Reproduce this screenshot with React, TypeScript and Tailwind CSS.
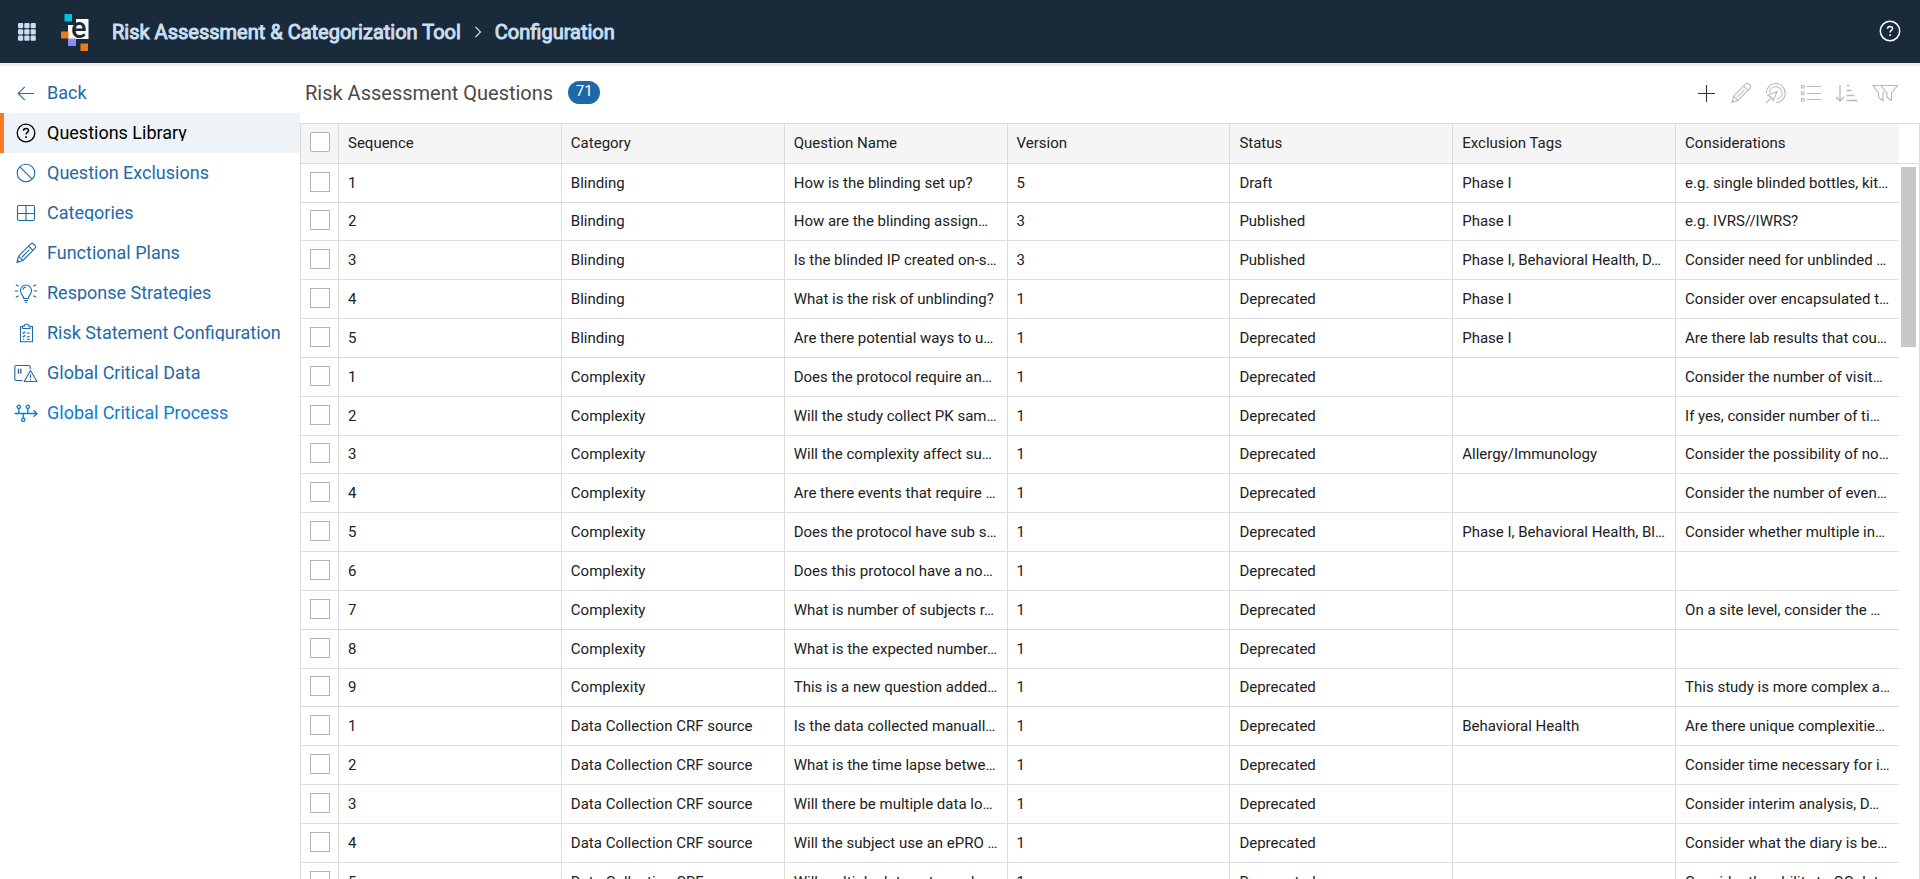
import type { ReactNode } from "react";

type Question = [string, string, string, string, string, string, string];

const columns = ["Sequence", "Category", "Question Name", "Version", "Status", "Exclusion Tags", "Considerations"];

const questions: Question[] = [
  ["1", "Blinding", "How is the blinding set up?", "5", "Draft", "Phase I", "e.g. single blinded bottles, kit…"],
  ["2", "Blinding", "How are the blinding assign…", "3", "Published", "Phase I", "e.g. IVRS//IWRS?"],
  ["3", "Blinding", "Is the blinded IP created on-s…", "3", "Published", "Phase I, Behavioral Health, D…", "Consider need for unblinded …"],
  ["4", "Blinding", "What is the risk of unblinding?", "1", "Deprecated", "Phase I", "Consider over encapsulated t…"],
  ["5", "Blinding", "Are there potential ways to u…", "1", "Deprecated", "Phase I", "Are there lab results that cou…"],
  ["1", "Complexity", "Does the protocol require an…", "1", "Deprecated", "", "Consider the number of visit…"],
  ["2", "Complexity", "Will the study collect PK sam…", "1", "Deprecated", "", "If yes, consider number of ti…"],
  ["3", "Complexity", "Will the complexity affect su…", "1", "Deprecated", "Allergy/Immunology", "Consider the possibility of no…"],
  ["4", "Complexity", "Are there events that require …", "1", "Deprecated", "", "Consider the number of even…"],
  ["5", "Complexity", "Does the protocol have sub s…", "1", "Deprecated", "Phase I, Behavioral Health, Bl…", "Consider whether multiple in…"],
  ["6", "Complexity", "Does this protocol have a no…", "1", "Deprecated", "", ""],
  ["7", "Complexity", "What is number of subjects r…", "1", "Deprecated", "", "On a site level, consider the …"],
  ["8", "Complexity", "What is the expected number…", "1", "Deprecated", "", ""],
  ["9", "Complexity", "This is a new question added…", "1", "Deprecated", "", "This study is more complex a…"],
  ["1", "Data Collection CRF source", "Is the data collected manuall…", "1", "Deprecated", "Behavioral Health", "Are there unique complexitie…"],
  ["2", "Data Collection CRF source", "What is the time lapse betwe…", "1", "Deprecated", "", "Consider time necessary for i…"],
  ["3", "Data Collection CRF source", "Will there be multiple data lo…", "1", "Deprecated", "", "Consider interim analysis, D…"],
  ["4", "Data Collection CRF source", "Will the subject use an ePRO …", "1", "Deprecated", "", "Consider what the diary is be…"],
  ["5", "Data Collection CRF source", "Will multiple data entry and…", "1", "Deprecated", "", "Consider the ability to QC dat…"],
];

function Icon({ children, viewBox = "0 0 24 24", className = "size-6" }: { children: ReactNode; viewBox?: string; className?: string }) {
  return (
    <svg viewBox={viewBox} fill="none" stroke="currentColor" strokeWidth="1.1" className={`shrink-0 ${className}`} aria-hidden="true">
      {children}
    </svg>
  );
}

const pencil = (
  <>
    <path d="M3 21.500l1.500-6.300L16.800 2.900a1.800 1.800 0 0 1 2.600 0l1.700 1.700a1.800 1.800 0 0 1 0 2.600L8.900 19.500z" />
    <path d="M4.500 15.200l4.400 4.300M14.600 5.100l4.300 4.300M7.800 16.300l7.600-7.600M3.600 19.200l1.600 1.600" />
  </>
);

const questionMark = (
  <>
    <path d="M9.500 9.700c0-1.500 1.100-2.300 2.500-2.300s2.500.8 2.500 2.100c0 1.800-2.400 1.900-2.400 3.900" strokeWidth="1.500" />
    <path d="M12.100 15.200v1.700" strokeWidth="1.600" />
  </>
);

const navItems: { label: string; icon: ReactNode }[] = [
  {
    label: "Back",
    icon: <path d="M20 12.500H4.500M10.800 5.800L4.200 12.500l6.600 6.700" />,
  },
  {
    label: "Questions Library",
    icon: (
      <>
        <circle cx="12" cy="12" r="8.800" strokeWidth="1.300" />
        {questionMark}
      </>
    ),
  },
  {
    label: "Question Exclusions",
    icon: (
      <>
        <circle cx="12" cy="12" r="8.800" />
        <path d="M5.800 5.800l12.400 12.400" />
      </>
    ),
  },
  {
    label: "Categories",
    icon: (
      <>
        <rect x="3.500" y="4.500" width="17" height="15" rx="1.500" />
        <path d="M12 4.500v15M3.500 12.500h17" />
      </>
    ),
  },
  { label: "Functional Plans", icon: pencil },
  {
    label: "Response Strategies",
    icon: (
      <>
        <path d="M9.700 17.500c0-3-3.200-4-3.200-8a5.500 5.500 0 0 1 11 0c0 4-3.200 5-3.200 8z" />
        <path d="M9.900 19.500h4.200M10.800 21.200h2.400M9 8.800A3.200 3.200 0 0 1 11.800 6" />
        <path d="M.8 10h3.400M19.800 10h3.400M1.800 3.800l2.900 1.500M22.200 3.800l-2.900 1.500M1.800 16.300l2.900-1.500M22.200 16.300l-2.900-1.500" />
      </>
    ),
  },
  {
    label: "Risk Statement Configuration",
    icon: (
      <>
        <path d="M8.500 5.500h-2v15.300h12V5.500h-2" />
        <path d="M8.700 7.500V5h1.700a2 2 0 0 1 4 0h1.700v2.500z" />
        <path d="M8.800 11.500l.9.900 1.600-1.700M12.800 12h3M8.800 15l.9.900 1.600-1.700M12.800 15.700h3M9 18.200h1.200M12.800 18.200h3" />
      </>
    ),
  },
  {
    label: "Global Critical Data",
    icon: (
      <>
        <path d="M8.500 19.500H2.300A1.500 1.500 0 0 1 .8 18V6a1.500 1.500 0 0 1 1.500-1.500h12.400A1.500 1.500 0 0 1 16.200 6v2" />
        <path d="M4.500 7.800v5M6.800 7.800v5" strokeWidth="1.300" />
        <path d="M16.500 9.500l6.500 11H10.200z" strokeLinejoin="round" />
        <path d="M16.500 13.200v3.700M16.500 18v1.300" />
      </>
    ),
  },
  {
    label: "Global Critical Process",
    icon: (
      <>
        <path d="M.5 12.500H23M19.500 9.200l3.500 3.300-3.500 3.300M4.800 12.500V7.500M13.800 12.500V7.500M9.300 12.500v5" strokeWidth="1.300" />
        <circle cx="4.800" cy="5.800" r="1.700" strokeWidth="1.300" />
        <circle cx="13.800" cy="5.800" r="1.700" strokeWidth="1.300" />
        <circle cx="9.300" cy="18.800" r="1.700" strokeWidth="1.300" />
      </>
    ),
  },
];

const tools: { label: string; icon: ReactNode }[] = [
  { label: "Edit", icon: <Icon>{pencil}</Icon> },
  {
    label: "Activate",
    icon: (
      <Icon>
        <path d="M2.300 12.500A9.500 9.500 0 1 1 12 21.500" />
        <path d="M5.500 11.500A6.300 6.300 0 1 1 13.300 18.200" />
        <path d="M2 21.800l5.700-5.400M3.800 14.300l9.200-3.800-3.600 9.200-1.700-3.400z" />
      </Icon>
    ),
  },
  {
    label: "Details",
    icon: (
      <Icon>
        <path d="M2.500 4.500h2.500v2.500H2.500zM2.500 11h2.500v2.500H2.500zM2.500 17.500h2.500v2.500H2.500z" />
        <path d="M8 5.500h14M8 12.500h14M8 18.500h14" />
      </Icon>
    ),
  },
  {
    label: "Sort",
    icon: (
      <Icon>
        <path d="M6 4v16M2 16l4 4 4-4" strokeWidth="1.300" />
        <path d="M12.500 4.500h3M12.500 9.500h5M12.500 14.500h7.500M12.500 19.500h11" strokeWidth="1.300" />
      </Icon>
    ),
  },
  {
    label: "Clear filter",
    icon: (
      <Icon viewBox="0 0 32 24" className="h-6 w-8">
        <path d="M11.500 4.500h17.200l-6.200 7.300v7.700l-4.500-3.300v-4.400z" strokeLinejoin="round" />
        <path d="M10.500 4.500H3.800l5.700 7.300v4.400l4.500 3.600v-8l1.200-1.200" strokeLinejoin="round" />
      </Icon>
    ),
  },
];

function Logo() {
  return (
    <svg viewBox="0 0 28 38" className="mt-0.5 h-[38px] w-7 shrink-0 overflow-visible" role="img" aria-label="e logo">
      <path d="M15 5h12.500v20H7V11h8z" fill="#ffffff" />
      <rect x="3.500" y="0" width="7.500" height="7.500" fill="#00c1de" />
      <rect x="0" y="17.500" width="7.500" height="7" fill="#ec7a1b" />
      <rect x="7" y="24.500" width="8" height="7.500" fill="#8f8bfb" />
      <rect x="19.500" y="29.500" width="7.500" height="7.500" fill="#ec7a1b" />
      <text x="10" y="24" fontSize="29" fontWeight="500" fontFamily="Roboto, sans-serif" fill="#192b3a">e</text>
    </svg>
  );
}

export default function App() {
  return (
    <div className="flex h-screen flex-col overflow-hidden bg-white font-['Roboto',sans-serif]">
      <header className="flex h-[66px] shrink-0 items-center border-b-[3px] border-[#eeeeee] bg-[#192b3a] px-[18px] text-[#c9def2]">
        <button aria-label="Applications" className="mr-[25px]">
          <svg viewBox="0 0 18 18" className="size-[18px]" fill="currentColor" aria-hidden="true">
            {[0, 6.3, 12.6].map((y) =>
              [0, 6.3, 12.6].map((x) => <rect key={`${x}-${y}`} x={x} y={y} width="5.200" height="5.200" rx="1" />)
            )}
          </svg>
        </button>
        <Logo />
        <nav className="ml-[23px] flex items-center text-xl font-normal [-webkit-text-stroke:1px_currentColor]">
          <a href="#tool">Risk Assessment &amp; Categorization Tool</a>
          <svg viewBox="0 0 8 12" className="mx-[13px] h-3 w-2" fill="none" stroke="currentColor" strokeWidth="1.200" aria-hidden="true">
            <path d="M1.500 1l5 5-5 5" />
          </svg>
          <a href="#configuration">Configuration</a>
        </nav>
        <button aria-label="Help" className="ml-auto pb-0.5 text-white">
          <Icon>
            <circle cx="12" cy="12" r="9.700" strokeWidth="1.500" />
            {questionMark}
          </Icon>
        </button>
      </header>

      <div className="flex min-h-0 flex-1">
        <aside className="w-[300px] shrink-0 pt-[7px]">
          {navItems.map((item) => (
            <a
              key={item.label}
              href="#nav"
              className={
                item.label === "Questions Library"
                  ? "flex h-10 items-center gap-[9px] border-l-4 border-[#fd7a23] bg-[#eef3f8] pl-2.5 text-black"
                  : item.label === "Global Critical Process"
                    ? "flex h-10 items-center gap-[9px] border-l-4 border-transparent pl-2.5 text-[#0a7bd8]"
                    : "flex h-10 items-center gap-[9px] border-l-4 border-transparent pl-2.5 text-[#1f69a9]"
              }
            >
              <Icon>{item.icon}</Icon>
              <span className="overflow-hidden text-lg leading-4 whitespace-nowrap">{item.label}</span>
            </a>
          ))}
        </aside>

        <main className="flex min-w-0 flex-1 flex-col">
          <div className="flex h-[57px] shrink-0 items-center pr-[19px] pb-1 pl-[5px]">
            <h1 className="text-xl text-[#4a4a4a]">Risk Assessment Questions</h1>
            <span className="ml-[15px] flex h-[23px] w-8 items-center justify-center rounded-full bg-[#1f69a9] pb-0.5 text-[15px] text-white">71</span>
            <div className="ml-auto flex gap-[11px] text-[#b9b9b9]">
              <button aria-label="Add" className="text-[#333333]">
                <Icon>
                  <path d="M12.500 4v17M4 12.500h17" />
                </Icon>
              </button>
              {tools.map((tool) => (
                <button key={tool.label} aria-label={tool.label}>
                  {tool.icon}
                </button>
              ))}
            </div>
          </div>

          <div className="flex min-h-0 flex-1 overflow-hidden border-x border-t border-[#dcdcdc]">
            <div className="min-w-0 flex-1">
              <table className="w-full table-fixed border-separate border-spacing-0 text-[15px] text-[#212121]">
                <thead>
                  <tr className="h-10 bg-[#f5f5f5]">
                    <th className="w-[38px] border-r border-b border-[#dcdcdc] p-0 pb-1">
                      <input type="checkbox" aria-label="Select all" className="ml-[9px] block size-5 appearance-none rounded-xs border border-[#b4b4b4] bg-white" />
                    </th>
                    {columns.map((column) => (
                      <th key={column} className="border-r border-b border-[#dcdcdc] px-[9px] py-0 text-left font-normal last:border-r-0">
                        {column}
                      </th>
                    ))}
                  </tr>
                </thead>
                <tbody>
                  {questions.map((question, i) => (
                    <tr key={i} className="h-[39px] nth-[6n+2]:h-[38px]">
                      <td className="border-r border-b border-[#dcdcdc] p-0 pb-[3px]">
                        <input type="checkbox" aria-label={`Select row ${i + 1}`} className="ml-[9px] block size-5 appearance-none border border-[#b4b4b4] bg-white" />
                      </td>
                      {question.map((value, j) => (
                        <td key={j} className="overflow-hidden border-r border-b border-[#dcdcdc] px-[9px] py-0 whitespace-nowrap last:border-r-0">
                          {value}
                        </td>
                      ))}
                    </tr>
                  ))}
                </tbody>
              </table>
            </div>
            <div className="w-5 shrink-0">
              <div className="h-10 border-b border-[#dcdcdc]" />
              <div className="mt-[3px] ml-0.5 h-[180px] w-[15px] bg-[#c8c8c8]" />
            </div>
          </div>
        </main>
      </div>
    </div>
  );
}
